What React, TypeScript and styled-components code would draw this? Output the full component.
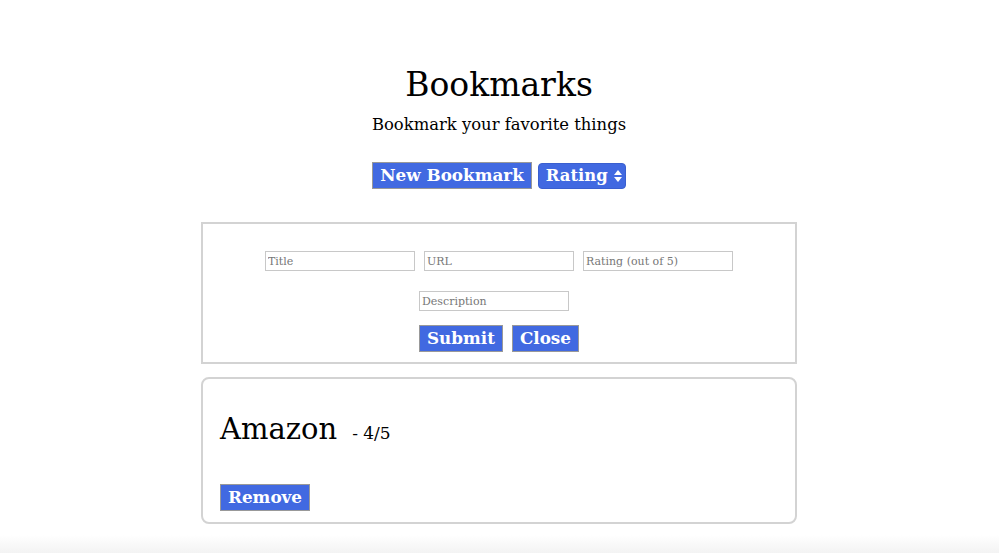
import React from "react";
import styled, { createGlobalStyle } from "styled-components";

const Global = createGlobalStyle`
  html, body { margin: 0; padding: 0; }
  body {
    min-height: 100vh;
    background: linear-gradient(to bottom, #ffffff calc(100% - 18px), #f3f3f3 100%);
    font-family: "DejaVu Serif", "Liberation Serif", serif;
    color: #000;
  }
`;

const Page = styled.div`
  display: flex;
  flex-direction: column;
  align-items: center;
  padding: 62px 1px 0 0;
`;

const Title = styled.h1`
  margin: 0;
  font-size: 33px;
  font-weight: normal;
  line-height: 46px;
`;

const Subtitle = styled.p`
  margin: 6px 0 0;
  font-size: 16.4px;
  line-height: 22px;
`;

const Toolbar = styled.div`
  display: flex;
  gap: 6px;
  margin-top: 26px;
  align-items: center;
`;

const Button = styled.button`
  height: 27px;
  padding: 0 7px;
  background: #4169e1;
  color: #fff;
  border: 1px solid #999;
  font-family: "DejaVu Serif", "Liberation Serif", serif;
  font-weight: bold;
  font-size: 16.8px;
  line-height: 25px;
  cursor: pointer;
`;

const SelectWrap = styled.div`
  position: relative;
  display: inline-flex;
`;

const Select = styled.select`
  appearance: none;
  box-sizing: border-box;
  height: 26px;
  padding: 0 17px 0 7px;
  background: #4169e1;
  color: #fff;
  border: 1px solid #3a5fcf;
  border-radius: 4px;
  font-family: "DejaVu Serif", "Liberation Serif", serif;
  font-weight: bold;
  font-size: 16.4px;
`;

const Arrows = styled.svg`
  position: absolute;
  right: 4px;
  top: 7px;
  pointer-events: none;
`;

const FormBox = styled.form`
  box-sizing: border-box;
  width: 596px;
  margin-top: 33px;
  border: 2px solid #d3d3d3;
  padding: 27px 0 10px;
  display: flex;
  flex-direction: column;
  align-items: center;
`;

const InputRow = styled.div<{ $mt?: number; $shift?: number }>`
  display: flex;
  gap: 9px;
  margin-top: ${(p) => p.$mt ?? 0}px;
  margin-right: ${(p) => p.$shift ?? 0}px;
`;

const Input = styled.input`
  box-sizing: border-box;
  width: 150px;
  height: 20px;
  border: 1px solid #c8c8c8;
  padding: 0 2px;
  font-family: "DejaVu Serif", "Liberation Serif", serif;
  font-size: 11px;
  &::placeholder { color: #777; }
`;

const Card = styled.div`
  box-sizing: border-box;
  width: 596px;
  margin-top: 13px;
  border: 2px solid #d3d3d3;
  border-radius: 8px;
  padding: 32px 17px 11px;
`;

const CardTitle = styled.div`
  display: flex;
  align-items: baseline;
  gap: 15px;
`;

const Name = styled.span`
  font-size: 29px;
  line-height: 36px;
`;

const Rating = styled.span`
  font-size: 17px;
`;

const CardActions = styled.div`
  margin-top: 37px;
  display: flex;
`;

export default function App() {
  return (
    <>
      <Global />
      <Page>
        <Title>Bookmarks</Title>
        <Subtitle>Bookmark your favorite things</Subtitle>
        <Toolbar>
          <Button type="button">New Bookmark</Button>
          <SelectWrap>
            <Select defaultValue="rating">
              <option value="rating">Rating</option>
            </Select>
            <Arrows width="8" height="12" viewBox="0 0 8 12">
              <path d="M4 0 L8 5 L0 5 Z" fill="#fff" />
              <path d="M0 7 L8 7 L4 12 Z" fill="#fff" />
            </Arrows>
          </SelectWrap>
        </Toolbar>
        <FormBox onSubmit={(e) => e.preventDefault()}>
          <InputRow>
            <Input placeholder="Title" />
            <Input placeholder="URL" />
            <Input placeholder="Rating (out of 5)" />
          </InputRow>
          <InputRow $mt={20} $shift={10}>
            <Input placeholder="Description" />
          </InputRow>
          <InputRow $mt={14}>
            <Button type="submit">Submit</Button>
            <Button type="button">Close</Button>
          </InputRow>
        </FormBox>
        <Card>
          <CardTitle>
            <Name>Amazon</Name>
            <Rating>- 4/5</Rating>
          </CardTitle>
          <CardActions>
            <Button type="button">Remove</Button>
          </CardActions>
        </Card>
      </Page>
    </>
  );
}
